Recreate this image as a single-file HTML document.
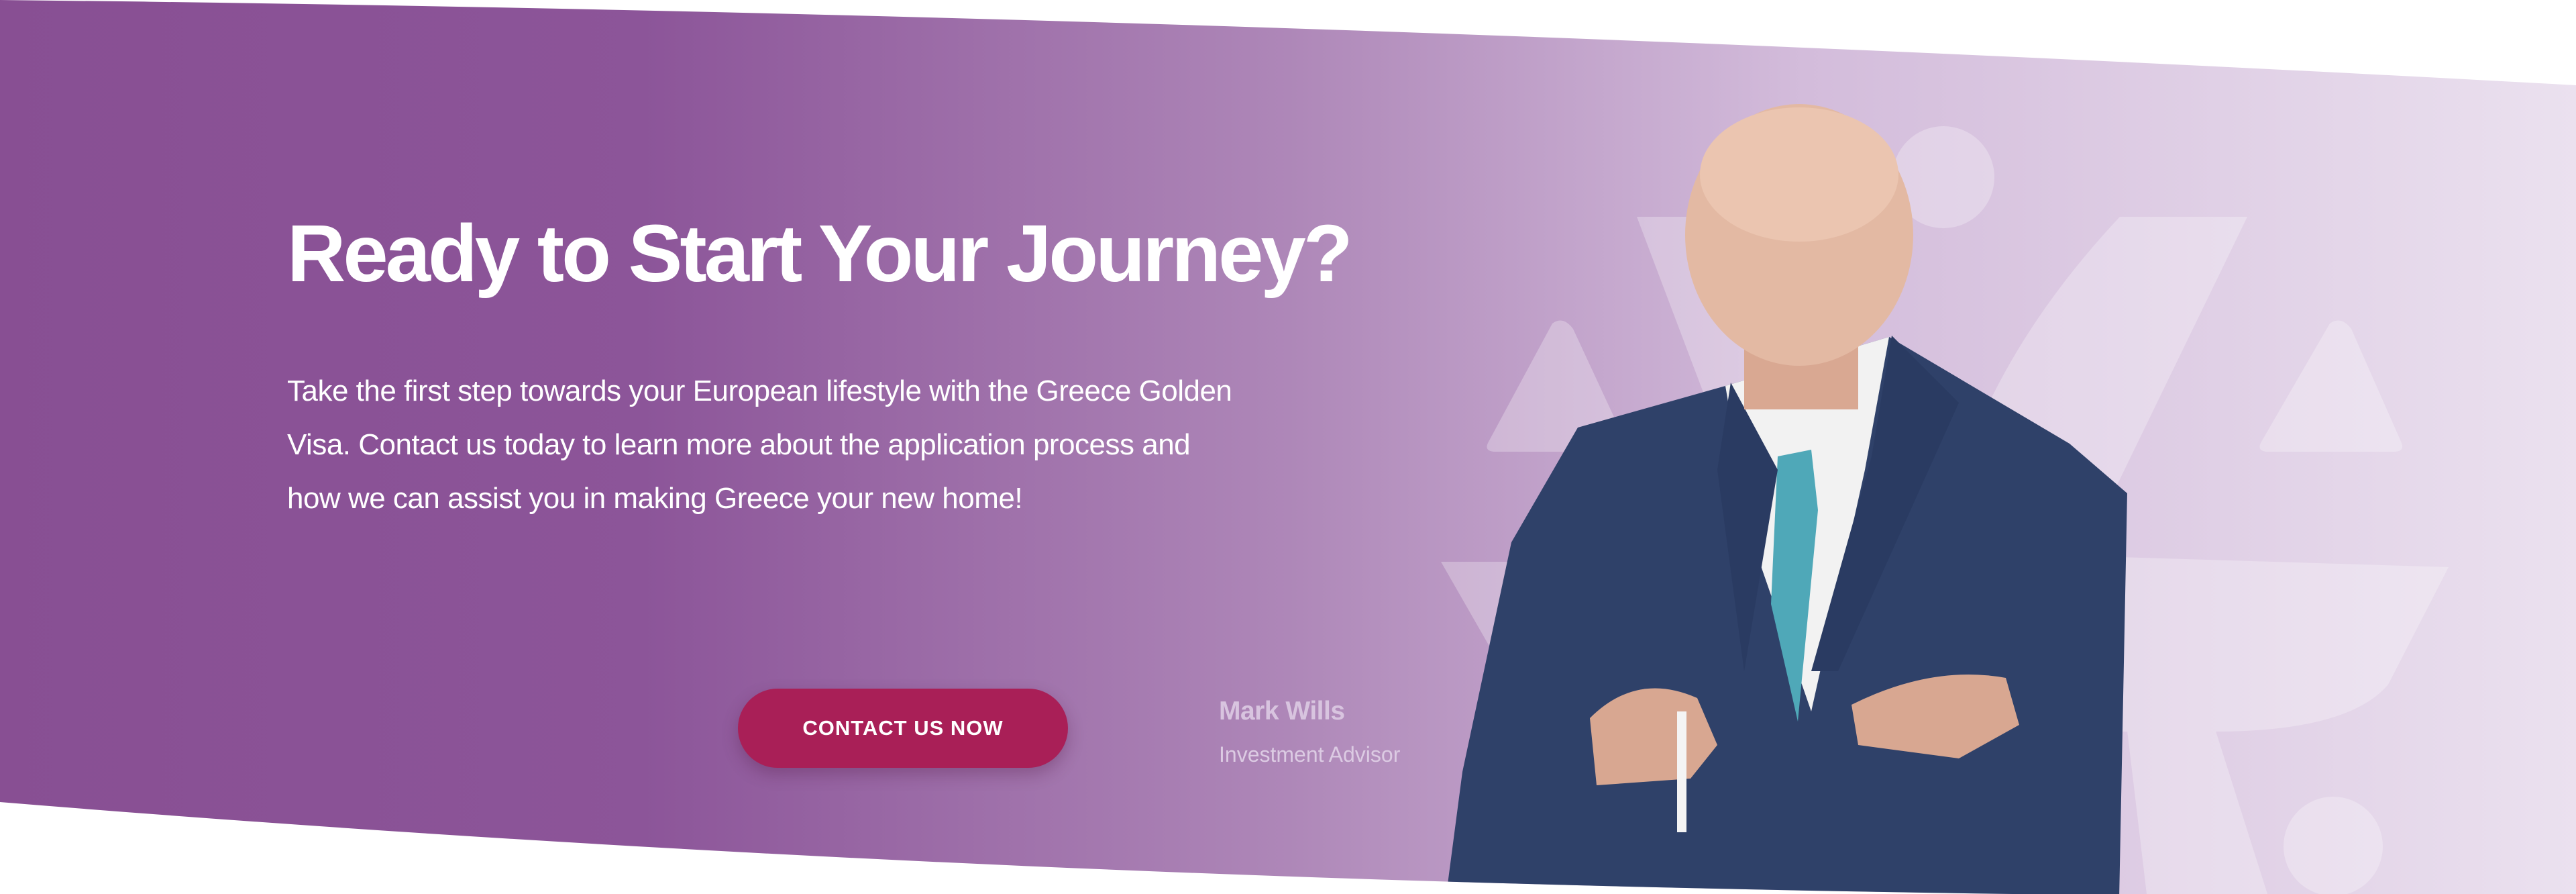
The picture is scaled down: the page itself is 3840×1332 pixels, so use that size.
<!DOCTYPE html>
<html><head><meta charset="utf-8"><style>
html,body{margin:0;padding:0;width:3840px;height:1332px;overflow:hidden;background:#fff;font-family:"Liberation Sans",sans-serif}
#wrap{position:relative;width:3840px;height:1332px}
svg{position:absolute;left:0;top:0}
h1{position:absolute;left:428px;top:305px;margin:0;font-size:121px;font-weight:700;color:#fff;letter-spacing:-4px;white-space:nowrap;line-height:1.2}
p{position:absolute;left:428px;top:543px;margin:0;width:1425px;font-size:44px;line-height:80px;color:#fff;letter-spacing:-0.5px}
.btn{position:absolute;left:1100px;top:1026px;width:492px;height:118px;border-radius:59px;background:#a91f57;color:#fff;font-weight:700;font-size:31px;letter-spacing:1px;display:flex;align-items:center;justify-content:center;box-shadow:0 10px 24px rgba(80,20,60,.3)}
.nm{position:absolute;left:1817px;top:1038px;font-size:39px;font-weight:700;color:#d8c4df;letter-spacing:-0.5px}
.rl{position:absolute;left:1817px;top:1106px;font-size:32px;color:#dccbe3}
</style></head><body><div id="wrap">
<svg width="3840" height="1332" viewBox="0 0 3840 1332">
<defs>
<linearGradient id="g" x1="0" x2="1" y1="0" y2="0">
<stop offset="0" stop-color="#884f93"/>
<stop offset="0.25" stop-color="#8c5599"/>
<stop offset="0.5" stop-color="#ae87b8"/>
<stop offset="0.7" stop-color="#d3bcdb"/>
<stop offset="1" stop-color="#ebe1ef"/>
</linearGradient>
<clipPath id="c"><path d="M0 0 Q1900 20 3840 127 L3840 1332 L3000 1332 Q1400 1310 0 1195 Z"/></clipPath>
</defs>
<path d="M0 0 Q1900 20 3840 127 L3840 1332 L3000 1332 Q1400 1310 0 1195 Z" fill="url(#g)"/>
<g clip-path="url(#c)" fill="#fff">
<g opacity="0.28">
<circle cx="2897" cy="264" r="76"/>
<path d="M2314 482 Q2330 470 2345 490 L2424 660 Q2428 673 2410 673 L2230 673 Q2212 673 2218 660 Z"/>
<path d="M3473 482 Q3490 470 3505 490 L3580 660 Q3585 673 3568 673 L3382 673 Q3364 673 3370 660 Z"/>
<path d="M2440 323 L2590 323 L2700 640 L2560 640 Z"/>
<path d="M3160 323 L3350 323 L3060 920 L2880 920 Q2900 600 3160 323 Z"/>
<path d="M3160 830 L3650 845 L3560 1020 Q3500 1090 3300 1090 L3160 1090 Z"/>
<path d="M2148 837 L2300 837 L2230 980 Z"/>
<path d="M3170 1080 L3300 1080 L3380 1332 L3200 1332 Z"/>
<circle cx="3478" cy="1261" r="74"/>
</g>
</g>
<g clip-path="url(#c)">
<path d="M2352 637 L2572 575 L2816 502 L3085 661 L3171 735 L3159 1340 L2155 1340 L2180 1150 L2253 808 Z" fill="#2f4169"/>
<path d="M2572 575 L2816 502 L2780 700 L2700 1060 L2610 800 Z" fill="#f2f2f2"/>
<path d="M2650 680 L2700 670 L2710 760 L2680 1075 L2640 900 Z" fill="#4fa8b8"/>
<path d="M2580 570 L2650 700 L2600 1000 L2560 700 Z" fill="#2a3b62"/>
<path d="M2820 500 L2920 600 L2740 1000 L2700 1000 L2790 680 Z" fill="#2a3b62"/>
<rect x="2600" y="480" width="170" height="130" fill="#d9a892"/>
<ellipse cx="2682" cy="350" rx="170" ry="195" fill="#e3b9a3"/>
<ellipse cx="2682" cy="260" rx="148" ry="100" fill="#ebc5b0"/>
<path d="M2370 1070 Q2440 1000 2530 1040 L2560 1110 L2520 1160 L2380 1170 Z" fill="#d8a791"/>
<path d="M2760 1050 Q2880 990 2990 1010 L3010 1080 L2920 1130 L2770 1110 Z" fill="#d8a791"/>
<rect x="2500" y="1060" width="14" height="180" fill="#f4f4f4"/>
</g>
</svg>
<h1>Ready to Start Your Journey?</h1>
<p>Take the first step towards your European lifestyle with the Greece Golden Visa. Contact us today to learn more about the application process and how we can assist you in making Greece your new home!</p>
<div class="btn">CONTACT US NOW</div>
<div class="nm">Mark Wills</div>
<div class="rl">Investment Advisor</div>
</div></body></html>
